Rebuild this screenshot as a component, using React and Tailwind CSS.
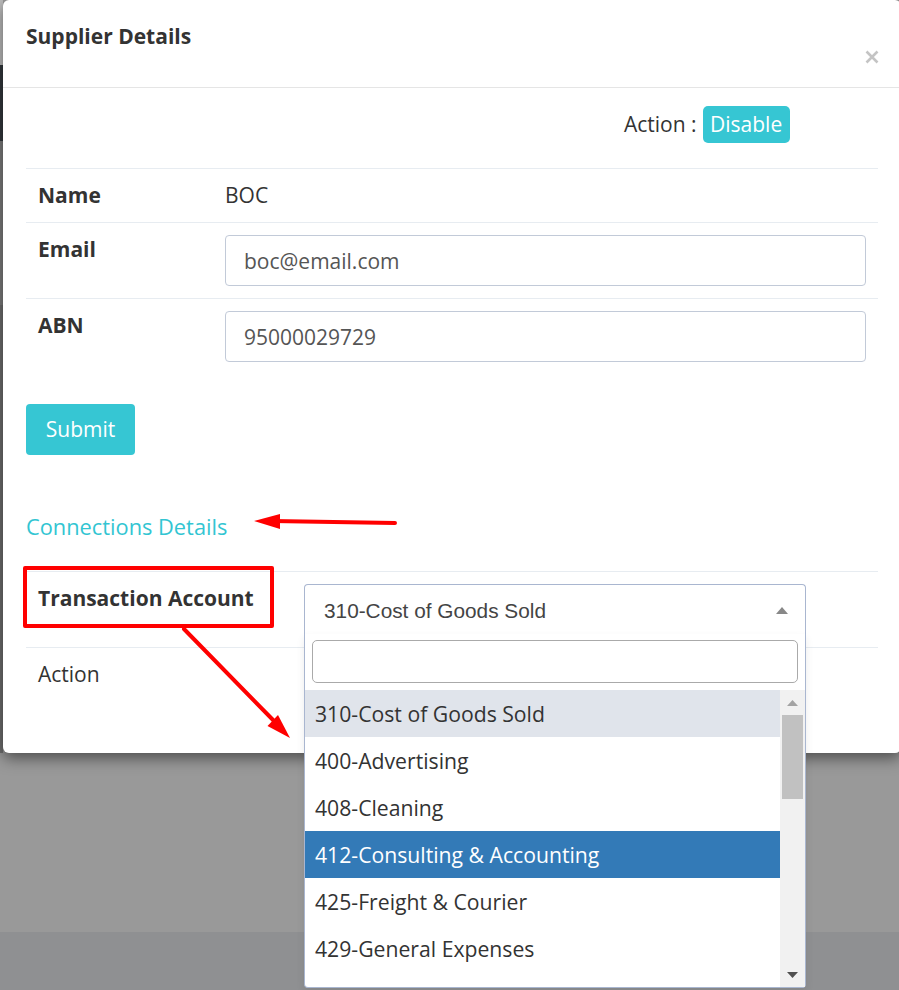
import { useState } from 'react';

const accounts = [
  '310-Cost of Goods Sold',
  '400-Advertising',
  '408-Cleaning',
  '412-Consulting & Accounting',
  '425-Freight & Courier',
  '429-General Expenses',
  '433-Insurance',
  '437-Interest Expense',
];

const Arrows = () => (
  <svg className="absolute inset-0 z-30 pointer-events-none" width="899" height="990" viewBox="0 0 899 990">
    {/* arrow to "Connections Details" */}
    <line x1="395" y1="523" x2="272" y2="521" stroke="#ff0000" strokeWidth="4" strokeLinecap="round" />
    <polygon points="254,521 280,514 280,529" fill="#ff0000" />
    {/* arrow from the red box down to the list */}
    <line x1="184" y1="629" x2="276" y2="723" stroke="#ff0000" strokeWidth="4" strokeLinecap="round" />
    <polygon points="290,738 267.5,726 278,715" fill="#ff0000" />
  </svg>
);

const AccountSelect = () => {
  const [selected] = useState(accounts[0]);
  const active = accounts[3];

  return (
    <div className="relative w-[502px]">
      <div className="h-[51px] border border-b-0 border-[#a9b6d0] rounded-t-[4px] bg-white flex items-center justify-between pl-[19px] pr-[17px] font-['Liberation_Sans',Arial,sans-serif] text-[20.8px] text-[#444]">
        <span>{selected}</span>
        <svg width="12" height="7" viewBox="0 0 12 7">
          <polygon points="0,7 6,0 12,7" fill="#888" />
        </svg>
      </div>
      <div className="absolute left-0 top-[50px] z-20 w-[502px] h-[354px] bg-white border border-t-0 border-[#a9b6d0] rounded-b-[4px] flex flex-col pt-[6px] shadow-[0_4px_8px_rgba(0,0,0,0.08)]">
        <div className="mx-[7px] h-[43px] border border-[#aaa] rounded-[5px]" />
        <div className="mt-[7px] flex h-[297px] overflow-hidden">
          <div className="flex-1 overflow-hidden">
            {accounts.map(a => (
              <div
                key={a}
                className={
                  a === active
                    ? 'px-[10px] py-[9px] leading-[29px] text-[21.2px] bg-[#337ab7] text-white'
                    : a === selected
                    ? 'px-[10px] py-[9px] leading-[29px] text-[21.2px] bg-[#e0e4eb] text-[#333]'
                    : 'px-[10px] py-[9px] leading-[29px] text-[21.2px] text-[#333]'
                }
              >
                {a}
              </div>
            ))}
          </div>
          <div className="w-[25px] bg-[#f1f1f1] flex flex-col">
            <div className="h-[25px] flex items-center justify-center">
              <svg width="11" height="6" viewBox="0 0 11 6">
                <polygon points="0,6 5.5,0 11,6" fill="#a3a3a3" />
              </svg>
            </div>
            <div className="flex-1 px-[2px]">
              <div className="h-[84px] bg-[#c1c1c1]" />
            </div>
            <div className="h-[25px] flex items-center justify-center">
              <svg width="11" height="6" viewBox="0 0 11 6">
                <polygon points="0,0 11,0 5.5,6" fill="#505050" />
              </svg>
            </div>
          </div>
        </div>
      </div>
    </div>
  );
};

const App = () => {
  return (
    <div className="relative w-[899px] h-[990px] overflow-hidden bg-[#999999] font-['Open_Sans',sans-serif] text-[#333]">
      <div className="flex h-[753px]">
        <div className="w-[3px] flex flex-col shrink-0">
          <div className="h-[65px] bg-[#bdbdbd]" />
          <div className="h-[76px] bg-[#33383d]" />
          <div className="h-[164px] bg-[#7d7d7d]" />
          <div className="flex-1 bg-[#6f6f6f]" />
        </div>

        <div className="relative z-10 w-[898px] shrink-0 bg-white rounded-[6px] shadow-[0_5px_15px_rgba(0,0,0,0.5)]">
          <div className="h-[88px] flex items-start justify-between pl-[23px] pr-[22px] pt-[21px] border-b border-[#e5e5e5]">
            <h4 className="text-[21px] leading-[30px] font-bold text-[#333]">Supplier Details</h4>
            <svg className="mt-[29px]" width="14" height="14" viewBox="0 0 14 14">
              <path d="M1.5 1.5 L12.5 12.5 M12.5 1.5 L1.5 12.5" stroke="#c4c4c4" strokeWidth="2.6" />
            </svg>
          </div>

          <div className="px-[23px] pt-[18px] pb-[51px]">
            <div className="h-[37px] flex items-center pl-[598px] gap-[6px] text-[21px]">
              <span>Action :</span>
              <span className="w-[87px] h-[37px] flex items-center justify-center rounded-[5px] bg-[#36c6d3] text-white">Disable</span>
            </div>

            <div className="mt-[25px] text-[21px] leading-[29px]">
              <div className="flex border-t border-[#e7ecf1]">
                <div className="w-[187px] px-[12px] py-[12px] font-bold">Name</div>
                <div className="flex-1 px-[12px] py-[12px]">BOC</div>
              </div>
              <div className="flex border-t border-[#e7ecf1]">
                <div className="w-[187px] px-[12px] py-[12px] font-bold">Email</div>
                <div className="flex-1 px-[12px] py-[12px]">
                  <input
                    readOnly
                    defaultValue="boc@email.com"
                    className="w-full h-[51px] px-[18px] border border-[#c2cad8] rounded-[4px] text-[21px] text-[#555] outline-none"
                  />
                </div>
              </div>
              <div className="flex border-t border-[#e7ecf1]">
                <div className="w-[187px] px-[12px] py-[12px] font-bold">ABN</div>
                <div className="flex-1 px-[12px] py-[12px]">
                  <input
                    readOnly
                    defaultValue="95000029729"
                    className="w-full h-[51px] px-[18px] border border-[#c2cad8] rounded-[4px] text-[21px] text-[#555] outline-none"
                  />
                </div>
              </div>
            </div>

            <button className="mt-[30px] w-[109px] h-[51px] rounded-[4px] bg-[#36c6d3] text-white text-[21px]">Submit</button>

            <h4 className="mt-[57px] text-[21.8px] leading-[30px] text-[#32c5d2]">Connections Details</h4>

            <div className="mt-[29px] text-[21px] leading-[29px]">
              <div className="flex border-t border-[#e7ecf1]">
                <div className="w-[266px] px-[12px] py-[12px] font-bold">Transaction Account</div>
                <div className="flex-1 px-[12px] py-[12px]">
                  <AccountSelect />
                </div>
              </div>
              <div className="flex border-t border-[#e7ecf1]">
                <div className="w-[266px] px-[12px] py-[12px]">Action</div>
                <div className="flex-1 px-[12px] py-[12px]" />
              </div>
            </div>
          </div>
        </div>
      </div>

      <div className="h-[179px]" />
      <div className="h-[58px] bg-[#8f9092]" />

      <div className="absolute z-30 left-[23px] top-[566px] w-[251px] h-[62px] border-4 border-[#ff0000] rounded-[2px] pointer-events-none" />
      <Arrows />
    </div>
  );
};

export default App;
